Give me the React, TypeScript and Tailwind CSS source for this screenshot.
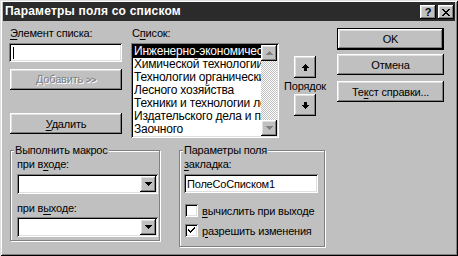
import React from "react";

const raised =
  "shadow-[inset_-1px_-1px_0_#000,inset_1px_1px_0_#fff,inset_-2px_-2px_0_#808080,inset_2px_2px_0_#dfdfdf]";
const sunken =
  "shadow-[inset_1px_1px_0_#808080,inset_-1px_-1px_0_#fff,inset_2px_2px_0_#000,inset_-2px_-2px_0_#dfdfdf]";
const etched =
  "border border-[#808080] shadow-[inset_1px_1px_0_#fff,1px_1px_0_#fff]";

function Btn({
  children,
  className = "",
}: {
  children?: React.ReactNode;
  className?: string;
}) {
  return (
    <div
      className={`flex items-center justify-center bg-[#c0c0c0] ${raised} ${className}`}
    >
      {children}
    </div>
  );
}

function U({ children }: { children: React.ReactNode }) {
  return <span className="underline underline-offset-[2px]">{children}</span>;
}

function Arrow({ dir, color = "#000" }: { dir: "up" | "down"; color?: string }) {
  return (
    <svg width="7" height="4" viewBox="0 0 7 4" className="block">
      {dir === "up" ? (
        <path d="M3 0h1v1h1v1h1v1h1v1H0V3h1V2h1V1h1z" fill={color} />
      ) : (
        <path d="M0 0h7v1H6v1H5v1H4v1H3V3H2V2H1V1H0z" fill={color} />
      )}
    </svg>
  );
}

function OrderArrow({ dir }: { dir: "up" | "down" }) {
  return (
    <svg width="7" height="7" viewBox="0 0 7 7" className="block">
      {dir === "up" ? (
        <path d="M3 0h1v1h1v1h1v1h1v1H5v3H2V4H0V3h1V2h1V1h1z" fill="#000" />
      ) : (
        <path d="M2 0h3v3h2v1H6v1H5v1H4v1H3V6H2V5H1V4H0V3h2z" fill="#000" />
      )}
    </svg>
  );
}

function Combo() {
  return (
    <div className={`flex h-[20px] w-[141px] bg-white p-[2px] ${sunken}`}>
      <div className="flex-1" />
      <Btn className="h-full w-[16px]">
        <Arrow dir="down" />
      </Btn>
    </div>
  );
}

function Check({ checked }: { checked?: boolean }) {
  return (
    <div
      className={`flex h-[13px] w-[13px] shrink-0 items-center justify-center bg-white ${sunken}`}
    >
      {checked && (
        <svg width="7" height="7" viewBox="0 0 7 7" className="block">
          <path
            d="M6 0h1v2H6v1H5v1H4v1H3v1H2V5H1V4H0V2h1v1h1v1h1V3h1V2h1V1h1z"
            fill="#000"
          />
        </svg>
      )}
    </div>
  );
}

const items = [
  "Инженерно-экономический",
  "Химической технологии и",
  "Технологии органических",
  "Лесного хозяйства",
  "Техники и технологии лесозаготовок",
  "Издательского дела и полиграфии",
  "Заочного",
];

export default function App() {
  return (
    <div className="h-[256px] w-[458px] whitespace-nowrap bg-[#c0c0c0] px-[3px] pt-[2px] text-[11px] leading-[14px] tracking-[-0.2px] text-black [font-family:'Liberation_Sans',Arial,sans-serif] shadow-[inset_1px_1px_0_#dfdfdf,inset_-1px_-1px_0_#000,inset_2px_2px_0_#fff,inset_-2px_-2px_0_#808080]">
      {/* Title bar */}
      <div className="flex h-[19px] items-end justify-between bg-[#2b2b2b] pb-[2px] pl-[2px] pr-[1px]">
        <div className="self-center text-[12px] font-bold leading-[16px] tracking-[0.2px] text-white">
          Параметры поля со списком
        </div>
        <div className="flex gap-[2px]">
          <Btn className="h-[14px] w-[16px]">
            <span className="text-[11px] font-bold leading-[11px]">?</span>
          </Btn>
          <Btn className="h-[14px] w-[16px]">
            <svg width="8" height="7" viewBox="0 0 8 7" className="block">
              <path
                d="M0 0h2v1h1v1h2V1h1V0h2v1H7v1H6v1H5v1h1v1h1v1h1v1H6V6H5V5H3v1H2v1H0V6h1V5h1V4h1V3H2V2H1V1H0z"
                fill="#000"
              />
            </svg>
          </Btn>
        </div>
      </div>

      {/* Top row */}
      <div className="flex items-start pl-[6px] pt-[5px]">
        {/* Column 1 */}
        <div className="flex w-[113px] flex-col">
          <div className="h-[14px] pl-[1px]">
            <U>Э</U>лемент списка:
          </div>
          <div className={`mt-[3px] flex h-[19px] items-center bg-white px-[4px] ${sunken}`}>
            <div className="h-[12px] w-[1px] bg-black" />
          </div>
          <Btn className="ml-[1px] mt-[7px] h-[21px]">
            <span className="text-[#808080] [text-shadow:1px_1px_0_#fff]">
              Добавить <span className="text-[9px] font-bold">&gt;&gt;</span>
            </span>
          </Btn>
          <Btn className="ml-[1px] mt-[23px] h-[21px]">
            <span>
              <U>У</U>далить
            </span>
          </Btn>
        </div>

        {/* Column 2: list */}
        <div className="ml-[9px] flex w-[148px] flex-col">
          <div className="h-[14px] pl-[1px]">
            С<U>п</U>исок:
          </div>
          <div className={`mt-[3px] flex h-[95px] bg-white p-[2px] ${sunken}`}>
            <div className="flex min-w-0 flex-1 flex-col overflow-hidden text-[12px]">
              {items.map((t, i) => (
                <div
                  key={t}
                  className={`h-[13px] pl-[1px] leading-[13px] ${
                    i === 0 ? "bg-black text-white" : ""
                  }`}
                >
                  {t}
                </div>
              ))}
            </div>
            <div className="flex w-[16px] flex-col">
              <Btn className="h-[16px]">
                <Arrow dir="up" color="#808080" />
              </Btn>
              <div className="flex-1 bg-[repeating-conic-gradient(#fff_0_25%,#c0c0c0_0_50%)] [background-size:2px_2px]" />
              <Btn className="h-[16px]">
                <Arrow dir="down" color="#808080" />
              </Btn>
            </div>
          </div>
        </div>

        {/* Column 3: order */}
        <div className="ml-[4px] flex w-[44px] flex-col items-center pt-[30px]">
          <Btn className="h-[22px] w-[22px]">
            <OrderArrow dir="up" />
          </Btn>
          <div className="flex h-[16px] items-center">Порядок</div>
          <Btn className="h-[22px] w-[22px]">
            <OrderArrow dir="down" />
          </Btn>
        </div>

        {/* Column 4: buttons */}
        <div className="ml-[10px] flex w-[107px] flex-col pt-[2px]">
          <div className="h-[22px] border border-black">
            <Btn className="h-full">OK</Btn>
          </div>
          <Btn className="mt-[4px] h-[21px]">Отмена</Btn>
          <Btn className="mt-[6px] h-[21px]">
            <span>
              Те<U>к</U>ст справки...
            </span>
          </Btn>
        </div>
      </div>

      {/* Bottom row */}
      <div className="flex items-start pl-[7px] pt-[12px]">
        {/* Left group */}
        <div className={`relative h-[91px] w-[150px] ${etched}`}>
          <div className="absolute left-[3px] top-[-8px] bg-[#c0c0c0] px-[1px]">
            Выполнить макрос
          </div>
          <div className="flex flex-col pl-[6px] pt-[6px]">
            <div className="h-[14px]">
              при в<U>х</U>оде:
            </div>
            <div className="mt-[3px]">
              <Combo />
            </div>
            <div className="mt-[7px] h-[14px]">
              при в<U>ы</U>ходе:
            </div>
            <div className="mt-[2px]">
              <Combo />
            </div>
          </div>
        </div>

        {/* Right group */}
        <div className={`relative ml-[19px] h-[97px] w-[146px] ${etched}`}>
          <div className="absolute left-[3px] top-[-8px] bg-[#c0c0c0] px-[1px]">
            Параметры поля
          </div>
          <div className="flex flex-col pl-[4px] pt-[6px]">
            <div className="h-[14px]">
              <U>з</U>акладка:
            </div>
            <div className={`mt-[3px] flex h-[19px] w-[134px] items-center bg-white px-[3px] ${sunken}`}>
              ПолеСоСписком1
            </div>
            <div className="mt-[11px] flex h-[13px] items-center pl-[1px]">
              <Check />
              <span className="ml-[4px]">
                <U>в</U>ычислить при выходе
              </span>
            </div>
            <div className="mt-[7px] flex h-[13px] items-center pl-[1px]">
              <Check checked />
              <span className="ml-[4px]">
                <U>р</U>азрешить изменения
              </span>
            </div>
          </div>
        </div>
      </div>
    </div>
  );
}
